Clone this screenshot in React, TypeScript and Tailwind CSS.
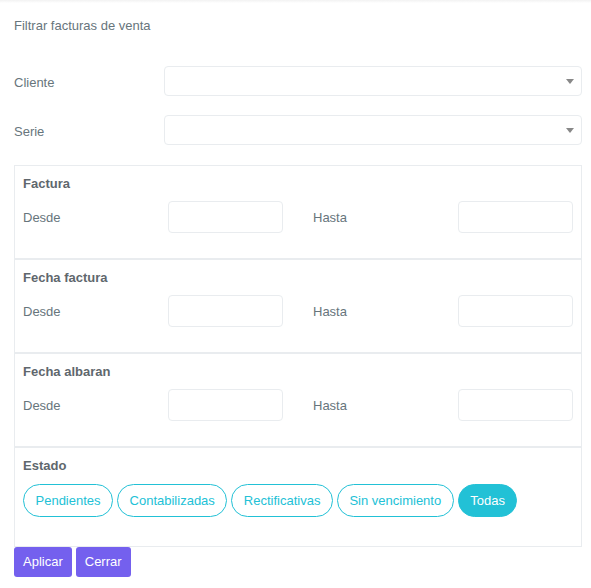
const font = { fontFamily: '"Liberation Sans", Arial, sans-serif' };

function SelectBox() {
  return (
    <div className="flex h-[30px] flex-1 items-center justify-end rounded-[4px] border border-[#e9ecef] bg-white pr-[7px]">
      <span className="h-0 w-0 border-x-[4px] border-t-[5px] border-x-transparent border-t-[#888]" />
    </div>
  );
}

function RangeSection({ title }: { title: string }) {
  return (
    <section className="border border-[#e9ecef] px-[8px] pb-[25px] pt-[8px]">
      <h3 className="text-[13px] font-bold leading-[20px] text-[#5f676d]">{title}</h3>
      <div className="mt-[7px] flex items-center gap-[30px]">
        <div className="flex items-center">
          <label className="w-[145px] pt-[2px] text-[13px] text-[#67757c]">Desde</label>
          <input className="h-[32px] w-[115px] rounded-[4px] border border-[#e9ecef] bg-white outline-none" />
        </div>
        <div className="flex items-center">
          <label className="w-[145px] pt-[2px] text-[13px] text-[#67757c]">Hasta</label>
          <input className="h-[32px] w-[115px] rounded-[4px] border border-[#e9ecef] bg-white outline-none" />
        </div>
      </div>
    </section>
  );
}

const estados = ["Pendientes", "Contabilizadas", "Rectificativas", "Sin vencimiento", "Todas"];

export default function App() {
  return (
    <div className="min-h-[588px] w-[591px] bg-white" style={font}>
      <div className="h-[3px] bg-gradient-to-b from-[#f2f2f2] to-white" />
      <div className="pl-[14px] pr-[9px]">
        <h2 className="mt-[13px] text-[13px] leading-[20px] text-[#67757c]">Filtrar facturas de venta</h2>

        <div className="mt-[30px] flex items-center">
          <label className="w-[150px] pt-[3px] text-[13px] text-[#67757c]">Cliente</label>
          <SelectBox />
        </div>
        <div className="mt-[19px] flex items-center">
          <label className="w-[150px] pt-[3px] text-[13px] text-[#67757c]">Serie</label>
          <SelectBox />
        </div>

        <div className="mt-[20px]">
          <RangeSection title="Factura" />
          <RangeSection title="Fecha factura" />
          <RangeSection title="Fecha albaran" />
          <section className="border border-[#e9ecef] px-[8px] pb-[29px] pt-[8px]">
            <h3 className="text-[13px] font-bold leading-[20px] text-[#5f676d]">Estado</h3>
            <div className="mt-[8px] flex gap-[4px]">
              {estados.map((e) =>
                e === "Todas" ? (
                  <button
                    key={e}
                    className="h-[33px] rounded-full border border-[#22c1d6] bg-[#22c1d6] px-[11.5px] text-[13px] text-white"
                  >
                    {e}
                  </button>
                ) : (
                  <button
                    key={e}
                    className="h-[33px] rounded-full border border-[#22c1d6] bg-white px-[11.5px] text-[13px] text-[#22c1d6]"
                  >
                    {e}
                  </button>
                )
              )}
            </div>
          </section>
        </div>

        <div className="flex gap-[4px]">
          <button className="h-[30px] rounded-[3px] bg-[#7460ee] px-[9px] text-[13px] text-white">Aplicar</button>
          <button className="h-[30px] rounded-[3px] bg-[#7460ee] px-[9px] text-[13px] text-white">Cerrar</button>
        </div>
      </div>
    </div>
  );
}
